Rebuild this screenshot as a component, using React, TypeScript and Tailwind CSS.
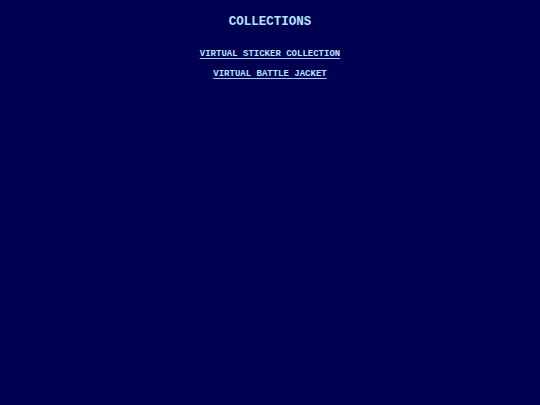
export default function App() {
  const links = ["Virtual Sticker Collection", "Virtual Battle Jacket"];

  return (
    <div
      className="flex min-h-screen w-full flex-col items-center bg-[#000050] pt-[16px] text-[#b4e4ff]"
      style={{ fontFamily: '"Liberation Mono", "DejaVu Sans Mono", monospace' }}
    >
      <h1 className="text-[12.5px] font-bold uppercase leading-[12px]">Collections</h1>
      <ul className="mt-[20px] flex flex-col items-center gap-[8px] text-[9px] leading-[12px]">
        {links.map((name) => (
          <li key={name} className="block">
            <a
              href="#"
              className="font-bold uppercase underline decoration-[#9fc8ff] underline-offset-[2px]"
            >
              {name}
            </a>
          </li>
        ))}
      </ul>
    </div>
  );
}
